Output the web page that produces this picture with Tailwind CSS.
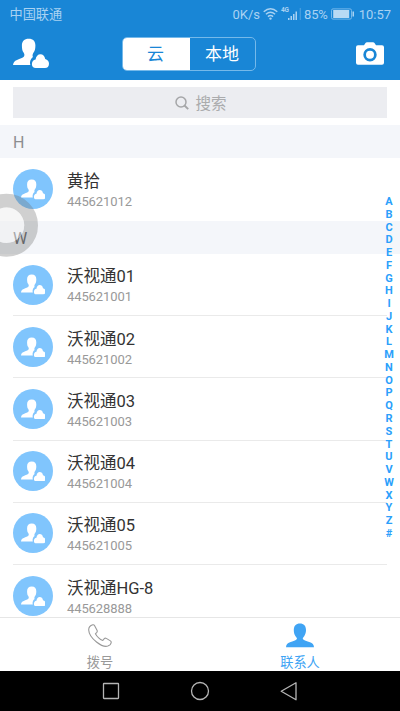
<!DOCTYPE html>
<html lang="zh-CN">
<head>
<meta charset="utf-8">
<title>联系人</title>
<script src="https://cdn.jsdelivr.net/npm/@tailwindcss/browser@4"></script>
</head>
<body class="w-[400px] h-[711px] overflow-hidden bg-white font-[Roboto,'Noto_Sans_CJK_SC',sans-serif]">
<svg class="hidden">
  <symbol id="cloud-user" viewBox="0 0 36 30">
    <path d="M0 27C.2 24.500 1.500 22.900 4 21.900C7 20.600 9.800 19.900 11 18.400C11.900 17 11.200 15.800 10.400 14.300C9.400 13 8.900 11 8.900 7.500C8.900 3.300 11.300.8 15.700.8C20.200.8 22.400 3.300 22.400 7.500C22.400 11 21.800 13 20.600 14.600C19.700 16 19.200 17.500 19.900 18.900C17.300 20.800 16.400 24 17.300 27Z"/>
    <path d="M22.800 30C20.300 30 18.900 28.500 18.900 26.200C18.900 23.700 20.300 22 22.600 21.600C23 18.200 24.900 16.200 27.400 16.200C29.900 16.200 31.700 18 32.200 20.900C34.600 21.600 36 23.200 36 25.700C36 28.400 34.500 30 32 30Z"/>
  </symbol>
</svg>
<div class="relative flex h-[711px] w-[400px] flex-col">
  <header class="h-20 shrink-0 bg-[#1986d6]">
    <div class="flex h-7 items-center pl-[9.500px] pr-[9px] text-[#a9d2f2]">
      <span class="pt-px text-[13.200px] leading-7">中国联通</span>
      <span class="ml-auto pt-px text-[13px] leading-7">0K/s</span>
      <svg class="ml-[3px] h-3 w-[15px]" viewBox="0 0 15 12" fill="none" stroke="currentColor" stroke-width="1.400"><path d="M.7 3.800Q7.500-2.100 14.300 3.800M2.900 6.300Q7.500 2.300 12.100 6.300M4.900 8.600Q7.500 6.500 10.100 8.600"/><circle cx="7.500" cy="10.600" r="1.200" fill="currentColor" stroke="none"/></svg>
      <span class="ml-[3px] h-3.5 w-2 text-[6.500px] font-bold leading-[7px] tracking-[-.3px]">4G</span>
      <svg class="-ml-[1px] h-3 w-[13px]" viewBox="0 0 13 12" fill="currentColor"><path d="M0 10h1.500v2H0zM2.500 8H4v4H2.500zM5 6h1.500v6H5zM7.500 3.500H9V12H7.500z"/><path d="M11.800 0h.8v12h-.8z" opacity=".5"/></svg>
      <span class="ml-[3px] pt-px text-[13px] leading-7 tracking-[-.2px]">85%</span>
      <svg class="ml-[3.500px] h-3 w-[24px]" viewBox="0 0 24 12"><rect x=".5" y=".9" width="20" height="10.200" rx="1.500" fill="none" stroke="#76b9eb"/><path d="M2.200 2h16v8H2.200z" fill="#b9daf4"/><path d="M21.500 3.500H23v5h-1.500z" fill="#a9d2f2"/></svg>
      <span class="ml-[3.500px] pt-px text-[13px] leading-7">10:57</span>
    </div>
    <div class="flex h-[52px] items-center px-[13px]">
      <svg class="mt-[-3px] h-[30px] w-9" fill="#fff"><use href="#cloud-user"/></svg>
      <div class="ml-[73px] mt-[-1px] flex h-[34px] w-[134px] overflow-hidden rounded-[5px] border border-[#75b9ea] text-[17px] leading-[33px]">
        <div class="w-[67px] bg-white pr-[2px] text-center text-[#1986d6]">云</div>
        <div class="flex-1 pr-px text-center text-white">本地</div>
      </div>
      <svg class="ml-auto mr-[3px] mt-[-1px] h-[23px] w-7" viewBox="0 0 28 23"><path fill="#fff" fill-rule="evenodd" d="M2 3.200h6L9.500 1Q10 .3 11 .3h6Q18 .3 18.500 1L20 3.200h6q2 0 2 2v15.500q0 2-2 2H2q-2 0-2-2V5.200q0-2 2-2ZM14 6a6.700 6.700 0 1 0 0 13.400A6.700 6.700 0 0 0 14 6Zm0 2.700a4 4 0 1 1 0 8 4 4 0 0 1 0-8Z"/></svg>
    </div>
  </header>
  <main class="flex-1 overflow-hidden">
    <div class="mx-[13px] mt-[7px] mb-[7px] flex h-[31px] items-center justify-center gap-[6px] bg-[#ecedf1] text-[15.500px] text-[#aaabad]">
      <svg class="ml-[2px] h-[14px] w-[14px]" viewBox="0 0 14 14" fill="none" stroke="#a5a6a8" stroke-width="1.500"><circle cx="6" cy="6" r="5"/><path d="m9.500 9.500 3.700 3.700" stroke-width="1.900"/></svg>
      <span class="pt-[3px] leading-[31px]">搜索</span>
    </div>
    <div class="h-[33px] bg-[#f4f6fa] pl-[13px] text-[16px] leading-[35px] text-[#8c8d90]">H</div>
    <div class="flex h-[62.500px] items-center gap-[14px] pl-[13px]">
      <div class="flex h-10 w-10 items-center justify-center rounded-full bg-[#80c5fd]"><svg class="h-[20.500px] w-[24.600px]" fill="#fff"><use href="#cloud-user"/></svg></div>
      <div class="pt-[2.500px]"><div class="h-[22px] text-[16.500px] leading-[22px] text-[#333]">黄拾</div><div class="text-[13px] leading-[17px] tracking-[-.1px] text-[#999]">445621012</div></div>
    </div>
    <div class="h-[33.500px] bg-[#f4f6fa] pl-[13px] text-[16px] leading-[35px] text-[#606164]">W</div>
    <div class="mx-[13px] flex h-[62.200px] items-center gap-[14px] border-b border-[#eaeaea]">
      <div class="flex h-10 w-10 items-center justify-center rounded-full bg-[#80c5fd]"><svg class="h-[20.500px] w-[24.600px]" fill="#fff"><use href="#cloud-user"/></svg></div>
      <div class="pt-[2.500px]"><div class="h-[22px] text-[16.500px] leading-[22px] text-[#333]">沃视通01</div><div class="text-[13px] leading-[17px] tracking-[-.1px] text-[#999]">445621001</div></div>
    </div>
    <div class="mx-[13px] flex h-[62.200px] items-center gap-[14px] border-b border-[#eaeaea]">
      <div class="flex h-10 w-10 items-center justify-center rounded-full bg-[#80c5fd]"><svg class="h-[20.500px] w-[24.600px]" fill="#fff"><use href="#cloud-user"/></svg></div>
      <div class="pt-[2.500px]"><div class="h-[22px] text-[16.500px] leading-[22px] text-[#333]">沃视通02</div><div class="text-[13px] leading-[17px] tracking-[-.1px] text-[#999]">445621002</div></div>
    </div>
    <div class="mx-[13px] flex h-[62.200px] items-center gap-[14px] border-b border-[#eaeaea]">
      <div class="flex h-10 w-10 items-center justify-center rounded-full bg-[#80c5fd]"><svg class="h-[20.500px] w-[24.600px]" fill="#fff"><use href="#cloud-user"/></svg></div>
      <div class="pt-[3px]"><div class="h-[22px] text-[16.500px] leading-[22px] text-[#333]">沃视通03</div><div class="text-[13px] leading-[17px] tracking-[-.1px] text-[#999]">445621003</div></div>
    </div>
    <div class="mx-[13px] flex h-[62.200px] items-center gap-[14px] border-b border-[#eaeaea]">
      <div class="flex h-10 w-10 items-center justify-center rounded-full bg-[#80c5fd]"><svg class="h-[20.500px] w-[24.600px]" fill="#fff"><use href="#cloud-user"/></svg></div>
      <div class="pt-[2.500px]"><div class="h-[22px] text-[16.500px] leading-[22px] text-[#333]">沃视通04</div><div class="text-[13px] leading-[17px] tracking-[-.1px] text-[#999]">445621004</div></div>
    </div>
    <div class="mx-[13px] flex h-[62.200px] items-center gap-[14px] border-b border-[#eaeaea]">
      <div class="flex h-10 w-10 items-center justify-center rounded-full bg-[#80c5fd]"><svg class="h-[20.500px] w-[24.600px]" fill="#fff"><use href="#cloud-user"/></svg></div>
      <div class="pt-[2.500px]"><div class="h-[22px] text-[16.500px] leading-[22px] text-[#333]">沃视通05</div><div class="text-[13px] leading-[17px] tracking-[-.1px] text-[#999]">445621005</div></div>
    </div>
    <div class="mx-[13px] flex h-[62.200px] items-center gap-[14px]">
      <div class="flex h-10 w-10 items-center justify-center rounded-full bg-[#80c5fd]"><svg class="h-[20.500px] w-[24.600px]" fill="#fff"><use href="#cloud-user"/></svg></div>
      <div class="pt-[2px]"><div class="h-[22px] text-[16.500px] leading-[22px] text-[#333]">沃视通HG-8</div><div class="text-[13px] leading-[17px] tracking-[-.1px] text-[#999]">445628888</div></div>
    </div>
  </main>
  <nav class="flex h-[54px] shrink-0 border-t border-[#e6e6e6] bg-white text-[13.200px]">
    <div class="flex w-1/2 flex-col items-center text-[#999]">
      <svg class="mt-[6px] h-6 w-6 shrink-0" viewBox="0 0 24 24" fill="none" stroke="#999" stroke-width="1.100" stroke-linejoin="round"><path d="M4.800.8C2.500 1.500.6 3.700.7 6C.9 10 4.500 14.800 8.500 18C12.300 21 17 23 19.800 22.100C21.500 21.500 23 20 23.200 18.500C23.300 17.800 23 17.300 22.400 16.900L18.300 14.400C17.500 13.900 16.800 14.100 16.300 14.700L14.800 16.500C12 15.500 9.200 13 7.400 9.800L8.800 8.300C9.300 7.700 9.400 7 9 6.200L6.500 1.500C6.100.8 5.500.6 4.800.8Z"/></svg>
      <span class="mt-[7px] leading-4">拨号</span>
    </div>
    <div class="flex w-1/2 flex-col items-center text-[#40a4f4]">
      <svg class="mt-[5px] h-[25px] w-7 shrink-0" viewBox="0 0 28 25" fill="currentColor"><path d="M0 24.300C.1 21.500 1.500 20.300 4 19.300C7 18 10 17.700 10.900 16C11.200 15 10.300 14.500 9.500 13.300C8.200 11.400 7.800 9.500 7.800 7C7.800 2.700 10 .5 13.900.5C17.800.5 20 2.700 20 7C20 9.500 19.400 11.400 18.200 13.300C17.400 14.500 16.500 15 16.900 16C17.800 17.700 21 18 24 19.300C26.500 20.300 27.900 21.500 28 24.300Z"/></svg>
      <span class="mt-[7px] leading-4">联系人</span>
    </div>
  </nav>
  <div class="flex h-10 shrink-0 items-center bg-black pl-[102px]">
    <svg class="h-[18px] w-[18px]" viewBox="0 0 18 18" fill="none" stroke="#b5b5b5" stroke-width="1.300"><rect x="1.500" y="1.500" width="15" height="15" rx=".5"/></svg>
    <svg class="ml-[70px] h-5 w-5" viewBox="0 0 20 20" fill="none" stroke="#b5b5b5" stroke-width="1.300"><circle cx="10" cy="10" r="8.500"/></svg>
    <svg class="ml-[70px] h-5 w-5" viewBox="0 0 20 20" fill="none" stroke="#b5b5b5" stroke-width="1.300" stroke-linejoin="round"><path d="M16 1.800v17L1.200 10.300Z"/></svg>
  </div>
  <div class="absolute left-[382px] top-[196px] flex w-[14px] flex-col text-center text-[11px] font-bold leading-[12.760px] text-[#2ba0fb]">
    <span>A</span><span>B</span><span>C</span><span>D</span><span>E</span><span>F</span><span>G</span><span>H</span><span>I</span><span>J</span><span>K</span><span>L</span><span>M</span><span>N</span><span>O</span><span>P</span><span>Q</span><span>R</span><span>S</span><span>T</span><span>U</span><span>V</span><span>W</span><span>X</span><span>Y</span><span>Z</span><span>#</span>
  </div>
  <div class="absolute left-0 top-[190px] h-[72px] w-[40px] overflow-hidden">
    <svg class="h-[72px] w-[40px]" viewBox="0 0 40 72"><circle cx="6.500" cy="35.200" r="24.600" fill="none" stroke="#707070" stroke-opacity=".33" stroke-width="13.800"/><circle cx="6.500" cy="35.200" r="17.700" fill="#eee" fill-opacity=".5"/></svg>
  </div>
</div>
</body>
</html>
